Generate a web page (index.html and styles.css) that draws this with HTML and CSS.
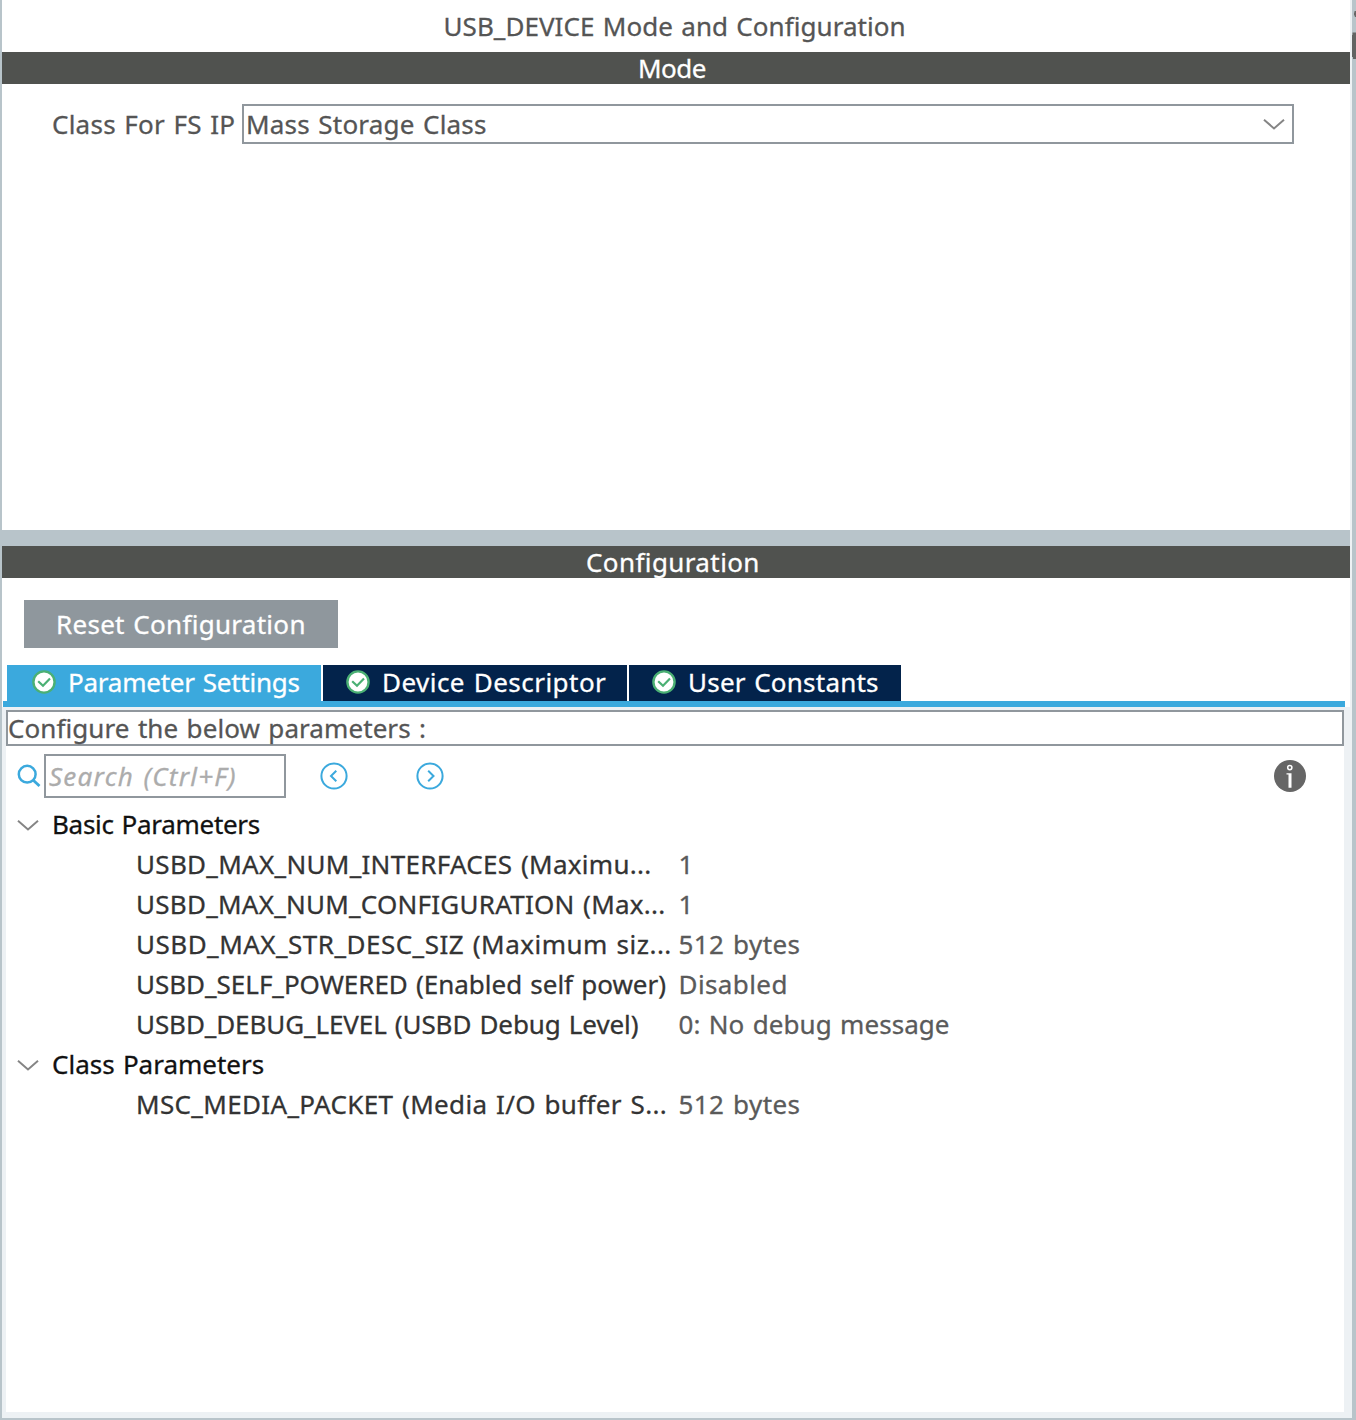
FILE: index.html
```
<!DOCTYPE html>
<html lang="en">
<head>
<meta charset="utf-8">
<title>USB_DEVICE Mode and Configuration</title>
<link rel="stylesheet" href="styles.css">
</head>
<body>
<svg class="defs" aria-hidden="true">
  <symbol id="check" viewBox="0 0 24 24">
    <circle cx="12" cy="12" r="10.6" fill="#fff" stroke="#4bb074" stroke-width="2.4"/>
    <path d="M6.2 11.2l4.8 4.6 7-7.2" fill="none" stroke="#4bb074" stroke-width="2.2"/>
  </symbol>
  <symbol id="chevron" viewBox="0 0 22 14">
    <path d="M1 2.8l10 8.6 10-8.6" fill="none" stroke="#858585" stroke-width="2"/>
  </symbol>
</svg>
<div class="window">
  <main class="panel">
    <h1 class="title">USB_DEVICE Mode and Configuration</h1>
    <h2 class="bar bar-mode">Mode</h2>
    <section class="mode">
      <span class="mode-label">Class For FS IP</span>
      <div class="select"><span>Mass Storage Class</span><svg class="chev"><use href="#chevron"/></svg></div>
    </section>
    <div class="splitter"></div>
    <h2 class="bar bar-config">Configuration</h2>
    <section class="actions"><button class="reset">Reset Configuration</button></section>
    <nav class="tabs">
      <div class="tab active"><svg class="check"><use href="#check"/></svg><span class="t-param">Parameter Settings</span></div>
      <div class="tab descriptor"><svg class="check"><use href="#check"/></svg><span class="t-desc">Device Descriptor</span></div>
      <div class="tab constants"><svg class="check"><use href="#check"/></svg><span class="t-user">User Constants</span></div>
    </nav>
    <div class="tab-line"></div>
    <section class="content">
      <div class="hint">Configure the below parameters :</div>
      <div class="body">
        <div class="toolbar">
          <svg class="search-icon" viewBox="0 0 24 24"><circle cx="10.2" cy="10.2" r="8.4" fill="none" stroke="#3ba9dd" stroke-width="2.5"/><path d="M16 16l6.5 6" stroke="#3ba9dd" stroke-width="2.8"/></svg>
          <div class="search">Search (Ctrl+F)</div>
          <svg class="nav prev" viewBox="0 0 28 28"><circle cx="14" cy="14" r="12.6"/><path d="M16.3 8.8L11 14l5.3 5.2"/></svg>
          <svg class="nav next" viewBox="0 0 28 28"><circle cx="14" cy="14" r="12.6"/><path d="M12.2 8.8l5.3 5.2-5.3 5.2"/></svg>
          <svg class="info" viewBox="0 0 32 32"><circle cx="16" cy="16" r="16" fill="#666"/><circle cx="15.8" cy="7.6" r="2.1" fill="none" stroke="#fff" stroke-width="1.5"/><path d="M12.5 13.3h5v14.4h-3V14.5h-2z" fill="#fff"/></svg>
        </div>
        <div class="group"><svg class="chev"><use href="#chevron"/></svg><span class="g-basic">Basic Parameters</span></div>
        <div class="row"><span class="n1">USBD_MAX_NUM_INTERFACES (Maximu...</span><span class="value">1</span></div>
        <div class="row"><span class="n2">USBD_MAX_NUM_CONFIGURATION (Max...</span><span class="value">1</span></div>
        <div class="row"><span class="n3">USBD_MAX_STR_DESC_SIZ (Maximum siz...</span><span class="value">512 bytes</span></div>
        <div class="row"><span class="n4">USBD_SELF_POWERED (Enabled self power)</span><span class="value v-dis">Disabled</span></div>
        <div class="row"><span class="n5">USBD_DEBUG_LEVEL (USBD Debug Level)</span><span class="value v-msg">0: No debug message</span></div>
        <div class="group"><svg class="chev"><use href="#chevron"/></svg><span class="g-class">Class Parameters</span></div>
        <div class="row"><span class="n6">MSC_MEDIA_PACKET (Media I/O buffer S...</span><span class="value">512 bytes</span></div>
      </div>
    </section>
  </main>
  <svg class="edge" viewBox="0 0 4 60"><path d="M4 11H2.5v1.5H2v3h.8V17H4z" fill="#666"/><path d="M4 32.5H0.5V35H0v22h1v2h3z" fill="#626463"/></svg>
</div>
</body>
</html>
```
FILE: styles.css
```
* { box-sizing: border-box; }

body {
  margin: 0;
  font: 26px/32px "Noto Sans", sans-serif;
  color: #555;
  background: #b8c4ca;
  word-spacing: 1.5px;
  -webkit-text-stroke: 0.3px currentColor;
}

svg { display: block; flex: none; }
.defs { position: absolute; width: 0; height: 0; }

.window {
  width: 1356px;
  height: 1420px;
  display: flex;
  padding: 0 0 2px 2px;
  overflow: hidden;
  white-space: nowrap;
}

.panel {
  width: 1350px;
  display: flex;
  flex-direction: column;
  background: #fff;
  border-right: 2px solid #edf1f4;
}

.edge { width: 4px; height: 60px; }

h1, h2 { margin: 0; font-size: 26px; font-weight: 400; }

.title {
  height: 52px;
  padding: 10px 0 0 441.5px;
  letter-spacing: 0.05px;
}

.bar {
  height: 32px;
  line-height: 32px;
  background: #50524f;
  color: #fff;
}
.bar-mode { padding-left: 636px; letter-spacing: -0.5px; }
.bar-config { padding-left: 584px; letter-spacing: 0.4px; }

.mode {
  height: 446px;
  padding: 20px 56px 0 50px;
  display: flex;
  align-items: flex-start;
}
.mode-label { width: 190px; line-height: 40px; letter-spacing: 0.24px; }
.select {
  flex: 1;
  height: 40px;
  display: flex;
  align-items: center;
  justify-content: space-between;
  padding: 0 7px 0 2px;
  border: 2px solid #90979d;
  letter-spacing: 0.2px;
}
.chev { width: 22px; height: 14px; }

.splitter { height: 16px; background: #b8c4ca; }

.actions { height: 87px; padding: 22px 0 0 22px; }
.reset {
  display: block;
  width: 314px;
  height: 48px;
  padding: 0 0 0 32px;
  border: 0;
  background: #8f979d;
  color: #fff;
  font: inherit;
  text-align: left;
  letter-spacing: 0.29px;
  word-spacing: inherit;
}

.tabs { display: flex; gap: 2px; padding-left: 5px; height: 36px; }
.tab {
  display: flex;
  align-items: center;
  gap: 12px;
  width: 314px;
  padding: 0 0 2px 25px;
  background: #03234b;
  color: #fff;
}
.tab.active { background: #3ba9dd; }
.tab.descriptor { width: 304px; padding-left: 23px; }
.tab.constants { width: 272px; padding-left: 23px; }
.check { width: 24px; height: 24px; }
.t-param { letter-spacing: -0.24px; }
.t-desc { letter-spacing: 0.47px; }
.t-user { letter-spacing: 0.22px; }

.tab-line { height: 6px; margin: 0 5px 0 1px; background: #3ba9dd; }

.content {
  flex: 1;
  padding: 3px 6px 6px 4px;
  background: #edf1f4;
  display: flex;
  flex-direction: column;
}
.hint {
  height: 36px;
  line-height: 33px;
  border: 2px solid #90979d;
  background: #fff;
  letter-spacing: 0.08px;
}
.body { flex: 1; background: #fff; }

.toolbar { display: flex; align-items: center; height: 59px; padding-left: 10.5px; }
.search-icon { width: 24px; height: 24px; margin-right: 3.5px; }
.search {
  width: 242px;
  height: 44px;
  line-height: 40px;
  padding-left: 3px;
  border: 2px solid #90979d;
  color: #acacac;
  font-style: italic;
  letter-spacing: 1.24px;
}
.nav { width: 28px; height: 28px; fill: none; stroke: #3ba9dd; stroke-width: 2; }
.prev { margin-left: 34px; }
.next { margin-left: 68px; }
.info { width: 32px; height: 32px; margin-left: auto; margin-right: 38px; }

.group, .row { display: flex; align-items: center; height: 40px; }
.group { padding-left: 11px; gap: 13px; color: #111; }
.row { padding-left: 130px; color: #333; }
.group span, .row span { padding-bottom: 2px; }
.row > :first-child { width: 542.5px; }
.row .value { color: #5a5a5a; letter-spacing: 0.42px; }
.g-basic { letter-spacing: -0.3px; }
.g-class { letter-spacing: 0; }
.n1 { letter-spacing: 0.3px; }
.n2 { letter-spacing: 0.25px; }
.n3 { letter-spacing: 0.49px; }
.n4 { letter-spacing: -0.02px; }
.n5 { letter-spacing: -0.1px; }
.n6 { letter-spacing: 0.35px; }
.row .v-dis { letter-spacing: 0.4px; }
.row .v-msg { letter-spacing: 0.06px; }
```
